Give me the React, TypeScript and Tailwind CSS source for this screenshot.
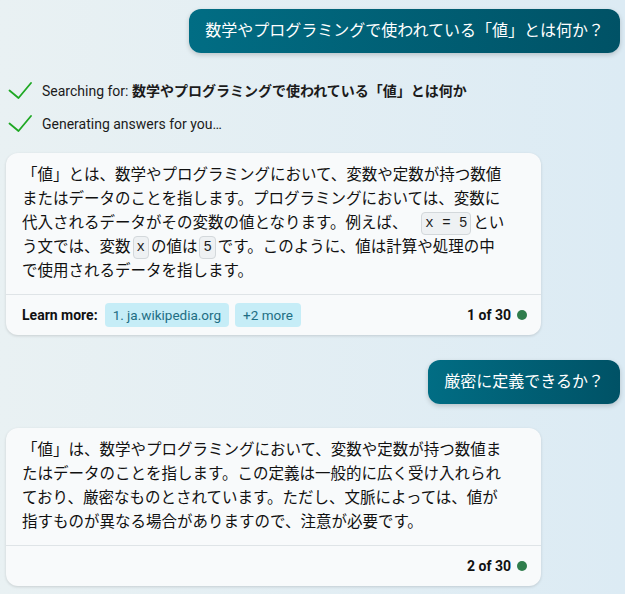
import React from 'react';

const font = { fontFamily: 'Roboto, "Noto Sans CJK JP", sans-serif' };

function Check() {
    return (
        <svg width="24" height="18" viewBox="0 0 24 18" fill="none" className="shrink-0">
            <polyline points="1.5,8.5 10.5,16 23,1" stroke="#1ea823" strokeWidth="1.8" strokeLinecap="round" strokeLinejoin="round" />
        </svg>
    );
}

function Code({ children, className = '' }: { children: React.ReactNode; className?: string }) {
    return (
        <code className={`inline-block leading-[21px] px-[3px] border border-[#d3d8db] bg-[#eef1f3] rounded-[4px] text-[14px] text-[#1b1b1b] font-['Liberation_Mono',monospace] whitespace-pre align-[1px] ${className}`}>
            {children}
        </code>
    );
}

function UserBubble({ text }: { text: string }) {
    return (
        <div className="flex justify-end pr-[5px]">
            <div className="px-4 py-[10px] rounded-[12px] text-white text-[16px] leading-[24px] bg-gradient-to-r from-[#016d84] to-[#005266] shadow-[0_2px_5px_rgba(0,0,0,0.18)]">
                {text}
            </div>
        </div>
    );
}

function Card({ children, footer }: { children: React.ReactNode; footer: React.ReactNode }) {
    return (
        <div className="ml-[6px] w-[535px] bg-[#f8fafb] rounded-[12px] shadow-[0_1px_3px_rgba(0,0,0,0.14)]">
            <div className="pl-4 pr-[34px] pt-[10px] pb-[11px] text-[15.5px] leading-[24px] text-[#111]">
                {children}
            </div>
            <div className="border-t border-[#dfe4e7] h-[41px] pl-4 pr-[14px] flex items-center">
                {footer}
            </div>
        </div>
    );
}

function Counter({ n }: { n: number }) {
    return (
        <div className="ml-auto flex items-center gap-[6px] text-[14px] font-bold text-[#111]">
            <span>{n} of 30</span>
            <span className="w-[10px] h-[10px] rounded-full bg-[#2f7d4c]" />
        </div>
    );
}

export default function App() {
    return (
        <div style={font} className="w-[625px] h-[594px] overflow-hidden bg-gradient-to-r from-[#e9f1f3] to-[#dcebf4] pt-[9px]">
            <UserBubble text="数学やプログラミングで使われている「値」とは何か？" />

            <div className="mt-[28px] flex flex-col gap-[13px] text-[14px] leading-[20px] text-[#1b1b1b]">
                <div className="flex items-center gap-[10px] pl-[8px]">
                    <Check />
                    <span>Searching for: <b className="font-bold">数学やプログラミングで使われている「値」とは何か</b></span>
                </div>
                <div className="flex items-center gap-[10px] pl-[8px]">
                    <Check />
                    <span>Generating answers for you…</span>
                </div>
            </div>

            <div className="mt-[19px]">
                <Card
                    footer={
                        <>
                            <span className="text-[14px] font-bold text-[#111]">Learn more:</span>
                            <span className="ml-[7px] h-[24px] px-2 flex items-center rounded-[4px] bg-[#c6edf7] text-[13.5px] text-[#1e6e84]">1. ja.wikipedia.org</span>
                            <span className="ml-[6px] h-[24px] px-2 flex items-center rounded-[4px] bg-[#c6edf7] text-[13.5px] text-[#1e6e84]">+2 more</span>
                            <Counter n={1} />
                        </>
                    }
                >
                    「値」とは、数学やプログラミングにおいて、変数や定数が持つ数値またはデータのことを指します。プログラミングにおいては、変数に代入されるデータがその変数の値となります。例えば、 <Code className="ml-[10px] mr-[2px]">x = 5</Code>という文では、変数<Code className="mx-[2px]">x</Code>の値は<Code className="mx-[2px]">5</Code>です。このように、値は計算や処理の中で使用されるデータを指します。
                </Card>
            </div>

            <div className="mt-[25px]">
                <UserBubble text="厳密に定義できるか？" />
            </div>

            <div className="mt-[24px]">
                <Card footer={<Counter n={2} />}>
                    「値」は、数学やプログラミングにおいて、変数や定数が持つ数値またはデータのことを指します。この定義は一般的に広く受け入れられており、厳密なものとされています。ただし、文脈によっては、値が指すものが異なる場合がありますので、注意が必要です。
                </Card>
            </div>
        </div>
    );
}
